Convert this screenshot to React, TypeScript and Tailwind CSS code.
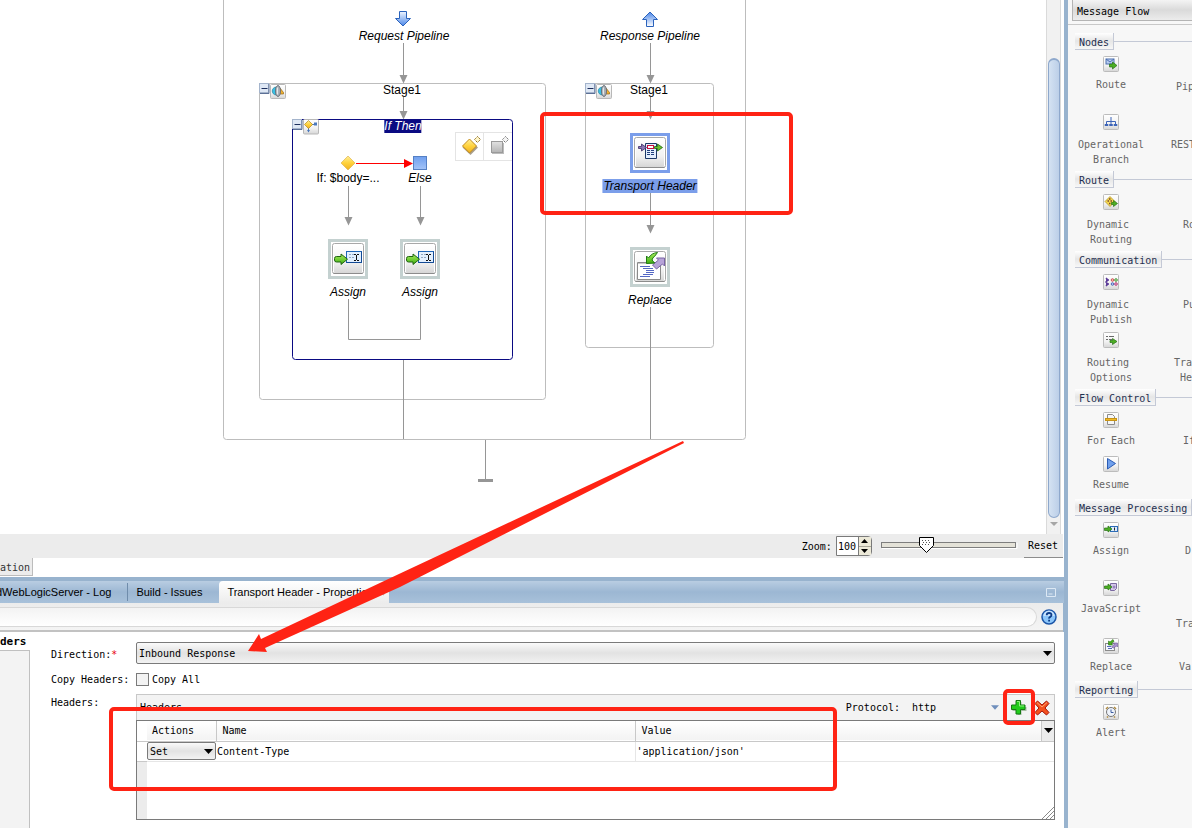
import React from "react";

const MONO = "font-['DejaVu_Sans_Mono','Liberation_Mono',monospace] text-[10px]";

function Defs() {
  return (
    <defs>
      <linearGradient id="btn" x1="0" y1="0" x2="0" y2="1">
        <stop offset="0" stopColor="#ffffff" />
        <stop offset="0.6" stopColor="#f2f2f2" />
        <stop offset="1" stopColor="#d6d6d6" />
      </linearGradient>
      <linearGradient id="blue" x1="0" y1="0" x2="0" y2="1">
        <stop offset="0" stopColor="#f0f6ff" />
        <stop offset="1" stopColor="#4a86e8" />
      </linearGradient>
      <linearGradient id="blueUp" x1="0" y1="1" x2="0" y2="0">
        <stop offset="0" stopColor="#ffffff" />
        <stop offset="1" stopColor="#4a86e8" />
      </linearGradient>
      <linearGradient id="gold" x1="0" y1="0" x2="0" y2="1">
        <stop offset="0" stopColor="#ffef9a" />
        <stop offset="0.5" stopColor="#ffd23c" />
        <stop offset="1" stopColor="#f0b020" />
      </linearGradient>
      <linearGradient id="green" x1="0" y1="0" x2="0" y2="1">
        <stop offset="0" stopColor="#a8ee5c" />
        <stop offset="1" stopColor="#3fae12" />
      </linearGradient>
      <linearGradient id="square" x1="0" y1="0" x2="0" y2="1">
        <stop offset="0" stopColor="#6f9fee" />
        <stop offset="1" stopColor="#a4c4f8" />
      </linearGradient>
      <linearGradient id="grey" x1="0" y1="0" x2="0" y2="1">
        <stop offset="0" stopColor="#e2e2e2" />
        <stop offset="1" stopColor="#b4b4b4" />
      </linearGradient>
    </defs>
  );
}

function Head({ x, y }: { x: number; y: number }) {
  return <path d={`M${x - 3.5} ${y - 8}h8l-4 8.500z`} fill="#969696" />;
}

function Toggle({ x, y }: { x: number; y: number }) {
  return (
    <g transform={`translate(${x} ${y})`}>
      <rect x="0.5" y="0.5" width="9" height="9" fill="#dfe8f5" stroke="#a4b4cc" />
      <path d="M10 1v9.500H1" stroke="#5c7096" fill="none" />
      <path d="M2.500 5.500h6" stroke="#1c2e5c" />
    </g>
  );
}

function StageIcon({ x, y }: { x: number; y: number }) {
  return (
    <g transform={`translate(${x} ${y})`}>
      <rect x="0.5" y="0.5" width="15" height="14" rx="1" fill="url(#btn)" stroke="#b8b8b8" />
      <path d="M6 3C1 3.500 1 10.500 6 11z" fill="#38c0e4" stroke="#28809c" strokeWidth="0.7" />
      <path d="M10 4l3.500 4.500V10H10z" fill="#f0b030" stroke="#9a6a14" strokeWidth="0.7" />
      <ellipse cx="8" cy="7" rx="2.500" ry="5.500" fill="#a9afb6" stroke="#666d75" strokeWidth="0.900" />
      <path d="M7.300 3.500v7" stroke="#f4f4f4" />
    </g>
  );
}

function NodeBox({ x, y, selected }: { x: number; y: number; selected?: boolean }) {
  return (
    <g transform={`translate(${x} ${y})`}>
      <rect x="1.500" y="1.500" width="37" height="37" fill="#fff" stroke={selected ? "#7b9eea" : "#c4d1d0"} strokeWidth="3" />
      <rect x="4.500" y="4.500" width="31" height="30" rx="2" fill="#fff" stroke="#a8a8a8" />
      <rect x="6" y="6" width="28" height="28" rx="1" fill="url(#btn)" />
      <path d="M5.500 34.500h29" stroke="#8c8c8c" />
    </g>
  );
}

function AssignGlyph({ x, y }: { x: number; y: number }) {
  return (
    <g transform={`translate(${x} ${y})`}>
      <rect x="12.500" y="0.500" width="15" height="11" fill="#e2f0ff" stroke="#1f66b8" />
      <path d="M12.500 11.500h15v-11" fill="none" stroke="#124a94" />
      <path d="M15 3.500h6M15 6.500h5" stroke="#90a8c4" strokeDasharray="2 1" />
      <path d="M20 3.500h2M23 3.500h2M22.500 4v5M20 9.500h2M23 9.500h2" stroke="#111" fill="none" />
      <path d="M0.500 7.500q0-2 2-2H7V3L13.500 8.200 7 13.500V11H2.500q-2 0-2-2z" fill="url(#green)" stroke="#1f6412" />
    </g>
  );
}

function Flow() {
  return (
    <svg width="760" height="534" viewBox="0 0 760 534" className="absolute top-0 left-0" aria-hidden="true">
      <Defs />
      <g fill="none" stroke="#bdbdbd">
        <path d="M223.500 0V436.500q0 3 3 3H742.500q3 0 3-3V0" />
        <rect x="259.500" y="83.500" width="286" height="316" rx="3" />
        <rect x="585.500" y="83.500" width="128" height="264" rx="3" />
      </g>
      <rect x="292.500" y="119.500" width="220" height="240" rx="3" fill="none" stroke="#0a0a82" />
      <g fill="none" stroke="#969696">
        <path d="M403.500 43V76M403.500 97V112M403.500 360V439M348.500 186V218M420.500 186V218M348.500 299V339.500H420.500V299" />
        <path d="M650.500 43V76M650.500 97V112M650.500 193V226M650.500 307V439M485.500 440V480" />
        <path d="M478 480.500h15" strokeWidth="3" />
      </g>
      <Head x={403} y={83} />
      <Head x={403} y={119} />
      <Head x={348} y={225} />
      <Head x={420} y={225} />
      <Head x={650} y={83} />
      <Head x={650} y={119} />
      <Head x={650} y={233} />

      <path d="M399.500 11.500h7v7h4l-7.500 7.500-7.500-7.500h4z" fill="url(#blue)" stroke="#2a62bc" />
      <path d="M646.500 26.500h7v-7h4L650 12l-7.500 7.500h4z" fill="url(#blueUp)" stroke="#2a62bc" />

      <Toggle x={259} y={83} />
      <StageIcon x={270} y={84} />
      <Toggle x={585} y={83} />
      <StageIcon x={596} y={84} />
      <Toggle x={292} y={119} />
      <g transform="translate(303 119)">
        <rect x="0.5" y="0.5" width="15" height="14.500" rx="1" fill="url(#btn)" stroke="#b8b8b8" />
        <path d="M5.500 6v7M5.500 5.500H12" stroke="#4b78bc" fill="none" />
        <path d="M4 11h3l-1.500 2.500zM11 3.500h3v3h-3z" fill="#4b78bc" />
        <path d="M5.500 1.500L9.500 5.500 5.500 9.500 1.500 5.500z" fill="url(#gold)" stroke="#b48718" strokeWidth="0.700" />
      </g>

      <g stroke="#e4e4e4" fill="#fff">
        <rect x="455.500" y="132.500" width="28" height="28" />
        <path d="M484 132.500h28M484 160.500h28" />
      </g>
      <path d="M470.500 140.500l7.500 7-7.500 7.500-8-7.500z" fill="#6c5c3c" opacity="0.6" />
      <path d="M469.500 139l7 7-7 7-7-7z" fill="url(#gold)" stroke="#c38c1c" />
      <path d="M477.500 136.500l3 3-3 3-3-3z" fill="#fff6c8" stroke="#8e6a1c" strokeDasharray="1.500 0.800" />
      <rect x="492" y="143" width="12" height="11" fill="#8f8f8f" opacity="0.6" />
      <rect x="491.500" y="141.500" width="11" height="11" fill="url(#grey)" stroke="#9a9a9a" />
      <path d="M505.500 136.500l3 3-3 3-3-3z" fill="#f4f4f4" stroke="#747474" strokeDasharray="1.500 0.800" />

      <path d="M348 156l7 7-7 7-7-7z" fill="url(#gold)" stroke="#e0b450" strokeWidth="0.700" />
      <path d="M356 163.500h50" stroke="#f00" />
      <path d="M404 159v9l9-4.500z" fill="#f00" />
      <rect x="413.500" y="156.500" width="13" height="13" fill="url(#square)" stroke="#5580c4" />

      <NodeBox x={328} y={239} />
      <AssignGlyph x={334} y={251} />
      <NodeBox x={400} y={239} />
      <AssignGlyph x={406} y={251} />

      <NodeBox x={630} y={133} selected />
      <path d="M645.500 143.500h11v15h-11z" fill="#e4efff" stroke="#1c3868" />
      <path d="M647 150.500h3M651 150.500h3M647 152.500h3M651 152.500h3M647 154.500h3M651 154.500h3" stroke="#22407c" />
      <path d="M638.500 146.500h3v-2.500l5 3.500-5 3.500v-2.500h-3z" fill="#8a78b4" stroke="#3c2a64" strokeWidth="0.800" />
      <path d="M654.500 146.500h3v-2.500l5 3.500-5 3.500v-2.500h-3z" fill="#67c02c" stroke="#1f6412" strokeWidth="0.800" />
      <rect x="647.500" y="145.500" width="6" height="3" fill="#fff" stroke="#c8103c" />

      <NodeBox x={630} y={247} />
      <g transform="translate(630 247)">
        <path d="M7.500 15.500h23v17h-23z" fill="#fff" stroke="#8a8a8a" />
        <path d="M8 16.500h22" stroke="#c8c8c8" />
        <path d="M10 19.500h10M13 21.500h10M16 23.500h8M16 25.500h8M13 27.500h10M10 29.500h10" stroke="#5468c4" />
        <path d="M22.500 18l6-5-2-2h8v8l-2-2-6 5z" fill="#b7a3d8" stroke="#7964a4" />
        <path d="M16.500 16.500v-7.500l2 2q3-5 9-5.500l-3 4q-2 1-2.500 3.500l2.500 3z" fill="url(#green)" stroke="#1f7a12" />
      </g>
    </svg>
  );
}

function Label({ className, children }: { className: string; children: React.ReactNode }) {
  return (
    <span className={`absolute -translate-x-1/2 text-xs leading-[14px] whitespace-nowrap ${className}`}>{children}</span>
  );
}

function Canvas() {
  return (
    <div className="relative min-h-[534px] min-w-0 flex-1 overflow-hidden text-black">
      <Flow />
      <Label className="top-[29px] left-[404px] italic">Request Pipeline</Label>
      <Label className="top-[29px] left-[650px] italic">Response Pipeline</Label>
      <Label className="top-[83px] left-[402px]">Stage1</Label>
      <Label className="top-[83px] left-[649px]">Stage1</Label>
      <Label className="top-[119px] left-[403px] bg-[#0a0a82] text-white italic">If Then</Label>
      <Label className="top-[171px] left-[348px]">If: $body=...</Label>
      <Label className="top-[171px] left-[420px] italic">Else</Label>
      <Label className="top-[285px] left-[348px] italic">Assign</Label>
      <Label className="top-[285px] left-[420px] italic">Assign</Label>
      <Label className="top-[179px] left-[650px] bg-[#7b9eea] px-px italic">Transport Header</Label>
      <Label className="top-[293px] left-[650px] italic">Replace</Label>
    </div>
  );
}

function Scrollbar() {
  return (
    <div className="mr-[3px] flex w-[15px] flex-col items-center border-x border-[#dadada] bg-[#f1f1f1]">
      <div className="h-[58px] w-full shrink-0" />
      <div className="w-3 flex-1 rounded-[6px] border border-t-2 border-[#8ea8cc] bg-linear-to-r from-[#d4e2f2] to-[#bccfe8]" />
      <svg width="8" height="16" viewBox="0 0 8 16" aria-hidden="true">
        <path d="M0 4h8L4 8z" fill="#a6a6a6" />
      </svg>
    </div>
  );
}

function ZoomBar() {
  return (
    <div className={`mr-px flex h-6 items-center justify-end bg-[#ececec] text-black ${MONO}`}>
      <label htmlFor="zoom" className="mr-1">Zoom:</label>
      <div className="flex h-5 w-9 rounded-r-sm border border-[#7a7a7a] bg-white">
        <input id="zoom" type="text" defaultValue="100" className="w-[21px] min-w-0 pl-px outline-none" />
        <div className="flex flex-1 flex-col border-l border-[#7a7a7a] bg-[#ece9d8]">
          <button type="button" aria-label="Zoom in" className="flex flex-1 items-center justify-center border-b border-[#a8a698]">
            <svg width="7" height="4" viewBox="0 0 7 4"><path d="M0 4h7L3.500 0z" /></svg>
          </button>
          <button type="button" aria-label="Zoom out" className="flex flex-1 items-center justify-center">
            <svg width="7" height="4" viewBox="0 0 7 4"><path d="M0 0h7L3.500 4z" /></svg>
          </button>
        </div>
      </div>
      <div className="relative ml-2 h-5 w-[138px]">
        <svg width="138" height="20" viewBox="0 0 138 20" aria-hidden="true">
          <rect x="1.500" y="6.500" width="134" height="5" fill="#e4e2d8" stroke="#7e7e7e" />
          <path d="M2 12.500h135V7" fill="none" stroke="#fff" />
          <path d="M39.500 1.500h14v8l-7 7-7-7z" fill="#fff" stroke="#000" />
          <path d="M42 4.500h9M43 6.500h7M42 8.500h9" stroke="#555" strokeDasharray="1 2" />
        </svg>
        <input type="range" aria-label="Zoom level" defaultValue={33} className="absolute inset-0 w-full opacity-0" />
      </div>
      <button type="button" className="ml-1.5 h-6 border-b border-[#8c8c8c] pr-[5px] pl-1 text-black">Reset</button>
    </div>
  );
}

function DownArrow({ className = "fill-black" }: { className?: string }) {
  return (
    <svg width="9" height="5" viewBox="0 0 9 5" className={className} aria-hidden="true">
      <path d="M0 0h9L4.500 5z" />
    </svg>
  );
}

function TabStrip() {
  return (
    <div className="bg-[#98b3ce] pt-1">
      <div className="flex h-[22px] items-stretch overflow-hidden bg-linear-to-b from-[#b9cde2] via-[#9cb7d3] to-[#a8c1da] text-[11px] text-black">
        <button type="button" className="-ml-1 pr-4">dWebLogicServer - Log</button>
        <button type="button" className="my-0.5 w-[92px] border-l border-[#6f8cab] pl-2 text-left">Build - Issues</button>
        <button type="button" className="flex w-[170px] items-center justify-between rounded-t-sm bg-linear-to-b from-white to-[#ececec] pr-1 pl-2">
          Transport Header - Properties
          <svg width="7" height="7" viewBox="0 0 7 7" aria-hidden="true"><path d="M1 1l5 5M6 1L1 6" stroke="#b8b8b8" strokeWidth="1.500" /></svg>
        </button>
        <span className="flex-1" />
        <button type="button" aria-label="Minimize" className="mr-2">
          <svg width="10" height="9" viewBox="0 0 10 9"><path d="M0.500 0.500h9v8h-9zM2.500 6h4" fill="none" stroke="#dce8f4" /></svg>
        </button>
      </div>
      <div className="mr-px flex h-[29px] items-center border-b-2 border-[#c2c2c2] bg-linear-to-b from-[#ececec] to-[#f4f4f4]">
        <div className="h-5 flex-1 rounded-r-full border-t border-r border-b border-[#d8d8d8] bg-linear-to-b from-[#f3f3f3] to-white" />
        <button type="button" aria-label="Help" className="mr-1.5 ml-1">
          <svg width="16" height="16" viewBox="0 0 16 16">
            <circle cx="8" cy="8" r="7" fill="#8cc6fa" stroke="#1c56a8" strokeWidth="1.500" />
            <path d="M2.500 7a5.500 5.500 0 0 1 11 0z" fill="#c8e4ff" />
            <path d="M5.700 6.200q0-2.200 2.400-2.200t2.400 2q0 1.200-1.300 1.900T8.100 9.700" fill="none" stroke="#0c3c88" strokeWidth="1.800" />
            <path d="M7.200 10.800h1.800v1.700H7.200z" fill="#0c3c88" />
          </svg>
        </button>
      </div>
    </div>
  );
}

const SELECT_LOOK = "appearance-none rounded-xs border border-[#7a7a7a] bg-linear-to-b from-[#fafafa] via-[#e2e2e2] to-[#f2f2f2] text-black";

function HeadersTable() {
  return (
    <div className="flex min-w-0 flex-1 flex-col border-t border-[#c8c8c8]">
      <div className="flex h-[25px] items-center border-x border-[#c8c8c8] bg-[#f3f3f3] pl-[3px]">
        <span className="flex-1">Headers</span>
        <label htmlFor="protocol">Protocol:</label>
        <span className="relative ml-3 flex w-[87px] items-center">
          <select id="protocol" className="w-full appearance-none text-black">
            <option>http</option>
          </select>
          <span className="pointer-events-none absolute right-0"><DownArrow className="w-2 fill-[#6f8fbc]" /></span>
        </span>
        <button type="button" aria-label="Add header" className="ml-[11px]">
          <svg width="17" height="17" viewBox="0 0 17 17">
            <path d="M7.500 3v5h-5v4h5v4h4v-4h5V8h-5V3z" fill="#1b5e14" opacity="0.35" />
            <path d="M6 1.500h4.500v4.500H15v4.500h-4.500V15H6v-4.500H1.500V6H6z" fill="#22cc1c" stroke="#157a12" />
            <path d="M7 2.500h2.500V7H14" fill="none" stroke="#8cf27c" />
          </svg>
        </button>
        <button type="button" aria-label="Remove header" className="mr-1 ml-[7px]">
          <svg width="16" height="16" viewBox="0 0 16 16">
            <path d="M1 3.500L3.500 1 8 5 12.500 1 15 3.500 11 8l4 4.500-2.500 2.500L8 11l-4.500 4L1 12.500 5 8z" fill="#f4501e" stroke="#a41408" />
            <path d="M3 2.500l5 4.500 5-4.500" fill="none" stroke="#ffa070" />
          </svg>
        </button>
      </div>
      <div className="relative flex min-h-[100px] flex-col border border-[#7a7a7a] bg-white">
        <table className="w-full table-fixed border-collapse text-left">
          <colgroup>
            <col className="w-[10px]" />
            <col className="w-[69px]" />
            <col className="w-[419px]" />
            <col />
            <col className="w-[13px]" />
          </colgroup>
          <thead>
            <tr className="h-5 border-b border-[#c8c8c8] bg-linear-to-b from-white to-[#f3f3f3]">
              <td className="bg-white" />
              <th className="border-r border-[#c8c8c8] pl-[5px] font-normal">Actions</th>
              <th className="border-r border-[#c8c8c8] pl-1.5 font-normal">Name</th>
              <th className="pl-1.5 font-normal">Value</th>
              <td className="border-l border-[#c8c8c8] bg-[#ececec] pl-0.5">
                <button type="button" aria-label="Columns" className="block"><DownArrow /></button>
              </td>
            </tr>
          </thead>
          <tbody>
            <tr className="h-5 border-b border-[#e6e6e6]">
              <td className="border-b border-[#c8c8c8]" />
              <td>
                <span className="relative flex items-center">
                  <select aria-label="Action" className={`h-[18px] w-full pl-0.5 ${SELECT_LOOK}`}>
                    <option>Set</option>
                  </select>
                  <span className="pointer-events-none absolute right-[3px]"><DownArrow /></span>
                </span>
              </td>
              <td className="border-r border-[#e6e6e6] pl-px">Content-Type</td>
              <td className="pl-px" colSpan={2}>'application/json'</td>
            </tr>
          </tbody>
        </table>
        <div className="w-[10px] flex-1 bg-[#ececec]" />
        <svg width="12" height="12" viewBox="0 0 12 12" className="absolute right-0 bottom-0" aria-hidden="true">
          <path d="M0 12L12 0M4 12l8-8M8 12l4-4" stroke="#8a8a8a" />
        </svg>
      </div>
    </div>
  );
}

function PropertiesForm() {
  return (
    <div className={`mr-px flex min-h-[196px] bg-white text-black ${MONO}`}>
      <div className="flex w-[30px] flex-col">
        <div className="h-[18px] pt-1 text-[11px] leading-3 font-bold">ders</div>
        <div className="flex-1 border-t border-r border-[#c0c0c0] bg-[#f3f3f3]" />
      </div>
      <form className="flex min-w-0 flex-1 flex-col pt-2.5 pr-2 pl-[21px]">
        <div className="flex h-[22px] items-center">
          <label htmlFor="direction" className="w-[85px] pt-0.5">
            Direction:<span className="text-red-600">*</span>
          </label>
          <span className="relative flex h-full flex-1 items-center">
            <select id="direction" className={`h-full w-full pl-0.5 ${SELECT_LOOK}`}>
              <option>Inbound Response</option>
            </select>
            <span className="pointer-events-none absolute right-[3px]"><DownArrow /></span>
          </span>
        </div>
        <div className="flex h-[30px] items-center">
          <span className="w-[85px]">Copy Headers:</span>
          <label className="flex items-center gap-[3px]">
            <input type="checkbox" className="size-[13px] appearance-none border border-[#7a7a7a] bg-[#f3f3f3]" />
            Copy All
          </label>
        </div>
        <div className="flex">
          <span className="w-[85px] pt-px">Headers:</span>
          <HeadersTable />
        </div>
      </form>
    </div>
  );
}

const GREEN_ARROW = "M1.500 6H5V4l4 3-4 3V8.500H1.500z";

const GLYPHS: Record<string, React.ReactNode> = {
  route: (
    <>
      <rect x="3" y="3" width="8" height="5" fill="#b8cdf0" stroke="#4c70b0" />
      <path d="M3 3l4 3 4-3" fill="none" stroke="#4c70b0" />
      <path d="M6.500 8h3V6l4.500 3.500-4.500 3.500v-2h-3z" fill="#4caf22" stroke="#277016" strokeWidth="0.700" />
    </>
  ),
  branch: <path d="M8 3v8M3.500 11V7.500h9V11M2 11.500h3v-1H2zM6.500 11.500h3v-1h-3zM11 11.500h3v-1h-3z" fill="none" stroke="#3c64b8" />,
  routing: (
    <>
      <path d="M7 2.500l5 5-5 5-5-5z" fill="#f4d64c" stroke="#ae9024" strokeWidth="0.700" />
      <path d="M4.500 7h1.500M7.500 7H9M6 9.500h1.500M6 5h1.500" stroke="#7a4a2c" strokeWidth="1.500" />
      <path d="M8.500 8.500h2V6.500L14.500 9.500l-4 3v-2h-2z" fill="#4caf22" stroke="#277016" strokeWidth="0.700" />
    </>
  ),
  publish: (
    <>
      <path d="M3 4l2 2-2 2 2 2-2 2M3 6h3M3 10h3" fill="none" stroke="#5c3c98" strokeWidth="1.500" />
      <circle cx="9.500" cy="6" r="1.300" fill="#f0c0c0" stroke="#d05050" />
      <circle cx="13" cy="6" r="1.300" fill="#c8e8c0" stroke="#4c9c40" />
      <circle cx="9.500" cy="10" r="1.300" fill="#c0ccf0" stroke="#4868b8" />
      <circle cx="13" cy="10" r="1.300" fill="#f0c0d8" stroke="#b83c78" />
    </>
  ),
  options: (
    <>
      <path d="M3 4.500h2M6 4.500h5M3 7.500h2M6 7.500h3" stroke="#6a6a6a" />
      <path d="M7 8.500h2.500V6.500L14 9.500l-4.500 3v-2H7z" fill="#4caf22" stroke="#277016" strokeWidth="0.700" />
    </>
  ),
  each: (
    <>
      <path d="M4.500 2.500h5l2 2v8h-7z" fill="#f6f6f6" stroke="#8c8c8c" />
      <rect x="2.500" y="6.500" width="11" height="2" fill="#f0b828" stroke="#c89414" />
    </>
  ),
  resume: <path d="M4.500 2.500l8 5-8 5.500z" fill="#70a0ec" stroke="#2c5cb4" />,
  assign: (
    <>
      <rect x="7.500" y="4.500" width="7" height="5" fill="#dcecff" stroke="#2c6cb8" />
      <path d="M11.500 5.500v3" stroke="#222" />
      <path d={GREEN_ARROW} fill="#4caf22" stroke="#277016" strokeWidth="0.700" />
    </>
  ),
  script: (
    <>
      <path d="M7.500 3.500h6v5l-2 2h-4z" fill="#d4c8e8" stroke="#7a68a0" />
      <circle cx="11" cy="7" r="1.500" fill="#9a86bc" />
      <path d={GREEN_ARROW} fill="#4caf22" stroke="#277016" strokeWidth="0.700" />
    </>
  ),
  replace: (
    <>
      <rect x="2.500" y="5.500" width="9" height="7" fill="#f4f6ff" stroke="#8a8a8a" />
      <path d="M4 8.500h4M5 10.500h4" stroke="#5468b8" />
      <path d="M8.500 9l3-3-1-1h4v4l-1-1-3 2z" fill="#a890cc" stroke="#6c5894" strokeWidth="0.600" />
      <path d="M5.500 7V3l1.500 1 3-2.500 1 2-2.500 2 1 1.500z" fill="#4caf22" stroke="#277016" strokeWidth="0.600" />
    </>
  ),
  alert: (
    <>
      <path d="M3 5l2-2M13 5l-2-2M5 12.500l-1 1M11 12.500l1 1" stroke="#b08a3c" strokeWidth="1.500" />
      <circle cx="8" cy="8" r="4.500" fill="#eef3fb" stroke="#767676" />
      <path d="M8 5.500v3h2.500" fill="none" stroke="#3c5ca0" />
    </>
  ),
};

type Item = { icon: string; lines: string[]; side?: string[]; pad?: string; tall?: boolean };

const SECTIONS: { title: string; items: Item[] }[] = [
  {
    title: "Nodes",
    items: [
      { icon: "route", lines: ["Route"], side: ["Pip"], pad: "pl-[29px]", tall: true },
      { icon: "branch", lines: ["Operational", "Branch"], side: ["REST"], pad: "pl-6", tall: true },
    ],
  },
  { title: "Route", items: [{ icon: "routing", lines: ["Dynamic ", "Routing"], side: ["Ro"], pad: "pl-9", tall: true }] },
  {
    title: "Communication",
    items: [
      { icon: "publish", lines: ["Dynamic ", "Publish"], side: ["Pu"], pad: "pl-9", tall: true },
      { icon: "options", lines: ["Routing ", "Options"], side: ["Tra", "He"], pad: "pl-[27px]", tall: true },
    ],
  },
  {
    title: "Flow Control",
    items: [
      { icon: "each", lines: ["For Each"], side: ["If"], pad: "pl-9" },
      { icon: "resume", lines: ["Resume"] },
    ],
  },
  {
    title: "Message Processing",
    items: [
      { icon: "assign", lines: ["Assign"], side: ["D"], pad: "pl-[38px]", tall: true },
      { icon: "script", lines: ["JavaScript"], side: [" ", "Tra"], pad: "pl-[29px]", tall: true },
      { icon: "replace", lines: ["Replace"], side: ["Va"], pad: "pl-8" },
    ],
  },
  { title: "Reporting", items: [{ icon: "alert", lines: ["Alert"] }] },
];

function Palette() {
  return (
    <aside className={`w-[128px] shrink-0 overflow-hidden border-l-4 border-[#98b3ce] bg-[#f7f7f7] ${MONO}`}>
      <div className="border-b border-[#c8c8c8] pb-[3px] pl-1">
        <h2 className="flex h-[21px] items-center border-b border-l border-[#b4b4b4] bg-linear-to-b from-[#f4f4f4] via-[#dadada] to-[#ececec] pt-0.5 pl-1 text-black">
          Message Flow
        </h2>
      </div>
      <div className="pt-2 pl-[7px]">
        {SECTIONS.map((section) => (
          <section key={section.title} className="not-first:-mt-px">
            <div className="flex h-[23px] items-start">
              <h3 className="h-[17px] border-r border-b border-[#c4c9d6] bg-linear-to-b from-white via-[#e6e6e6] to-[#f7f7f7] px-1 pt-0.5 leading-4 whitespace-nowrap text-[#1f2f50]">
                {section.title}
              </h3>
              <span className="mt-2 flex-1 border-t border-[#c4c9d6]" />
            </div>
            {section.items.map((item) => (
              <div key={item.icon} className={`flex leading-[15px] whitespace-pre text-[#666666] ${item.tall ? "h-[58px]" : "h-11"}`}>
                <button type="button" className="flex w-[72px] shrink-0 flex-col items-center">
                  <svg width="16" height="16" viewBox="0 0 16 16" aria-hidden="true">
                    <rect x="0.500" y="0.500" width="15" height="15" rx="1" fill="url(#btn)" stroke="#bcbcbc" />
                    {GLYPHS[item.icon]}
                  </svg>
                  <span className={`flex flex-col items-center ${item.lines.length > 1 ? "pt-[7px]" : "pt-[5px]"}`}>
                    {item.lines.map((line) => <span key={line}>{line}</span>)}
                  </span>
                </button>
                {item.side && (
                  <div className={`flex shrink-0 flex-col items-end ${item.lines.length > 1 || item.icon === "route" ? "pt-[23px]" : "pt-[21px]"} ${item.pad}`}>
                    {item.side.map((line) => <span key={line}>{line}</span>)}
                  </div>
                )}
              </div>
            ))}
          </section>
        ))}
      </div>
    </aside>
  );
}

function Markup() {
  return (
    <svg width="1192" height="828" viewBox="0 0 1192 828" className="pointer-events-none absolute top-0 left-0" aria-hidden="true">
      <g fill="none" stroke="#ff2314" strokeWidth="4">
        <rect x="542" y="114" width="249" height="99" rx="3" />
        <rect x="111" y="709" width="724" height="80" rx="3" />
        <rect x="1005" y="691" width="28" height="32" rx="3" />
      </g>
      <path d="M248 651L259 634 261 639 400 573.500 683 441 684 443 400 587 265 648 267 652z" fill="#ff2314" />
    </svg>
  );
}

export default function App() {
  return (
    <div className="relative flex min-h-screen overflow-hidden bg-white font-['Liberation_Sans',sans-serif]">
      <main className="flex min-w-0 flex-1 flex-col">
        <div className="flex flex-1">
          <Canvas />
          <Scrollbar />
        </div>
        <ZoomBar />
        <div className={`flex h-[19px] ${MONO}`}>
          <button type="button" className="h-[18px] border-r border-b border-[#bcbcbc] bg-[#ececec] pt-0.5 pr-0.5 text-[#333333]">ation</button>
        </div>
        <TabStrip />
        <PropertiesForm />
      </main>
      <Palette />
      <Markup />
    </div>
  );
}
